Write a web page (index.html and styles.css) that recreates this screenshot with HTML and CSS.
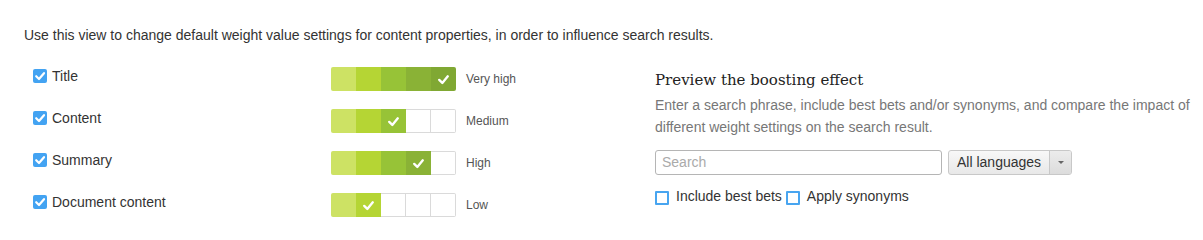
FILE: index.html
```html
<!DOCTYPE html>
<html>
<head>
<meta charset="utf-8">
<link rel="stylesheet" href="styles.css">
</head>
<body>
<p class="intro">Use this view to change default weight value settings for content properties, in order to influence search results.</p>
<div class="content">
  <div class="props">
    <div class="row">
      <label class="prop"><span class="cb checked"><svg viewBox="0 0 14 14"><path d="M3.2 7.2 L6 10 L11 4.2" fill="none" stroke="#fff" stroke-width="2.2" stroke-linecap="round" stroke-linejoin="round"/></svg></span>Title</label>
      <div class="bar">
        <span class="seg s1"></span><span class="seg s2"></span><span class="seg s3"></span><span class="seg s4"></span><span class="seg s5 sel"><svg viewBox="0 0 14 14"><path d="M3 7.4 L5.9 10.2 L11 4" fill="none" stroke="#fff" stroke-width="2.2" stroke-linecap="round" stroke-linejoin="round"/></svg></span>
      </div>
      <span class="wlabel">Very high</span>
    </div>
    <div class="row">
      <label class="prop"><span class="cb checked"><svg viewBox="0 0 14 14"><path d="M3.2 7.2 L6 10 L11 4.2" fill="none" stroke="#fff" stroke-width="2.2" stroke-linecap="round" stroke-linejoin="round"/></svg></span>Content</label>
      <div class="bar">
        <span class="seg s1"></span><span class="seg s2"></span><span class="seg s3 sel"><svg viewBox="0 0 14 14"><path d="M3 7.4 L5.9 10.2 L11 4" fill="none" stroke="#fff" stroke-width="2.2" stroke-linecap="round" stroke-linejoin="round"/></svg></span><span class="seg empty"></span><span class="seg empty last"></span>
      </div>
      <span class="wlabel">Medium</span>
    </div>
    <div class="row">
      <label class="prop"><span class="cb checked"><svg viewBox="0 0 14 14"><path d="M3.2 7.2 L6 10 L11 4.2" fill="none" stroke="#fff" stroke-width="2.2" stroke-linecap="round" stroke-linejoin="round"/></svg></span>Summary</label>
      <div class="bar">
        <span class="seg s1"></span><span class="seg s2"></span><span class="seg s3"></span><span class="seg s4 sel"><svg viewBox="0 0 14 14"><path d="M3 7.4 L5.9 10.2 L11 4" fill="none" stroke="#fff" stroke-width="2.2" stroke-linecap="round" stroke-linejoin="round"/></svg></span><span class="seg empty last"></span>
      </div>
      <span class="wlabel">High</span>
    </div>
    <div class="row">
      <label class="prop"><span class="cb checked"><svg viewBox="0 0 14 14"><path d="M3.2 7.2 L6 10 L11 4.2" fill="none" stroke="#fff" stroke-width="2.2" stroke-linecap="round" stroke-linejoin="round"/></svg></span>Document content</label>
      <div class="bar">
        <span class="seg s1"></span><span class="seg s2 sel"><svg viewBox="0 0 14 14"><path d="M3 7.4 L5.9 10.2 L11 4" fill="none" stroke="#fff" stroke-width="2.2" stroke-linecap="round" stroke-linejoin="round"/></svg></span><span class="seg empty"></span><span class="seg empty"></span><span class="seg empty last"></span>
      </div>
      <span class="wlabel">Low</span>
    </div>
  </div>
  <div class="preview">
    <h2 class="ptitle">Preview the boosting effect</h2>
    <p class="pdesc">Enter a search phrase, include best bets and/or synonyms, and compare the impact of different weight settings on the search result.</p>
    <div class="searchrow">
      <div class="search">Search</div>
      <div class="select"><span class="selval">All languages</span><span class="caret"></span></div>
    </div>
    <div class="opts">
      <label class="opt"><span class="cb empty-cb"></span>Include best bets</label>
      <label class="opt"><span class="cb empty-cb"></span>Apply synonyms</label>
    </div>
  </div>
</div>
</body>
</html>
```
FILE: styles.css
```css
html, body {
  margin: 0;
  padding: 0;
  background: #fff;
}
body {
  font-family: "Liberation Sans", Arial, sans-serif;
  font-size: 14px;
  color: #333;
  width: 1203px;
  height: 229px;
  overflow: hidden;
}
.intro {
  margin: 0;
  padding: 26px 0 0 24px;
  line-height: 18px;
  color: #333;
}
.content {
  display: flex;
  padding-left: 33px;
  margin-top: 14px;
}
.props {
  width: 622px;
  flex: none;
}
.row {
  display: flex;
  align-items: center;
  height: 42px;
}
.prop {
  width: 298px;
  display: flex;
  align-items: center;
  margin-top: -6px;
  line-height: 16px;
}
.cb {
  width: 14px;
  height: 14px;
  box-sizing: border-box;
  border-radius: 2px;
  display: inline-flex;
  flex: none;
  margin-right: 5px;
}
.cb svg {
  width: 14px;
  height: 14px;
}
.cb.checked {
  background: #43a3f2;
}
.cb.empty-cb {
  border: 2px solid #48a5f0;
  border-radius: 1px;
  margin-right: 7px;
  margin-top: 4px;
}
.bar {
  display: flex;
  width: 125px;
  height: 24px;
  flex: none;
}
.seg {
  width: 25px;
  height: 24px;
  box-sizing: border-box;
  display: flex;
  align-items: center;
  justify-content: center;
}
.seg:first-child {
  border-radius: 2px 0 0 2px;
}
.seg.last,
.seg.s5 {
  border-radius: 0 2px 2px 0;
}
.seg svg {
  width: 15px;
  height: 15px;
}
.s1 { background: #cde264; }
.s2 { background: #b5d534; }
.s3 { background: #97c337; }
.s4 { background: #8ab236; }
.s5 { background: #80a833; }
.seg.empty {
  background: #fff;
  border: 1px solid #dadada;
  border-left: none;
}
.wlabel {
  margin-left: 10px;
  font-size: 12px;
  color: #555;
}
.preview {
  width: 545px;
  flex: none;
}
.ptitle {
  margin: 10px 0 2px;
  font-family: "DejaVu Serif", Georgia, serif;
  font-weight: normal;
  font-size: 15px;
  line-height: 24px;
  color: #222;
}
.pdesc {
  margin: 0;
  line-height: 22px;
  color: #777;
}
.searchrow {
  display: flex;
  margin-top: 12px;
  height: 25px;
}
.search {
  width: 287px;
  height: 25px;
  box-sizing: border-box;
  border: 1px solid #b5b5b5;
  border-radius: 3px;
  padding: 0 6px;
  line-height: 23px;
  color: #aaa;
}
.select {
  margin-left: 6px;
  width: 124px;
  height: 25px;
  box-sizing: border-box;
  border: 1px solid #c8c8c8;
  border-radius: 3px;
  background: linear-gradient(#f8f8f8, #e8e8e8);
  display: flex;
}
.selval {
  width: 101px;
  box-sizing: border-box;
  border-right: 1px solid #c8c8c8;
  padding-left: 8px;
  line-height: 23px;
  color: #333;
}
.caret {
  flex: 1;
  position: relative;
  background: linear-gradient(#ececec, #dcdcdc);
  border-radius: 0 2px 2px 0;
}
.caret::after {
  content: "";
  position: absolute;
  left: 8px;
  top: 10px;
  border-left: 3px solid transparent;
  border-right: 3px solid transparent;
  border-top: 3px solid #666;
}
.opts {
  display: flex;
  margin-top: 12px;
}
.opt {
  display: flex;
  align-items: center;
  margin-right: 4px;
  line-height: 18px;
}
```
